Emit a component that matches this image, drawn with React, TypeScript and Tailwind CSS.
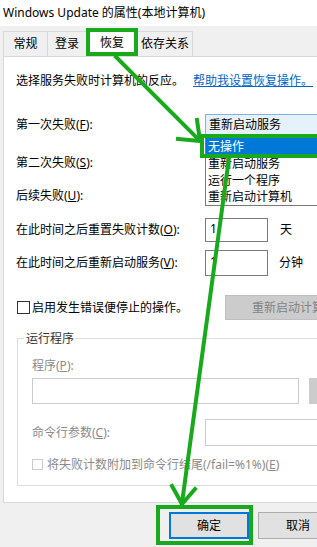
import React from 'react';

const font = { fontFamily: '"Noto Sans", "Noto Sans CJK SC", sans-serif' };

const Tab = ({ label, active }: { label: string; active?: boolean }) => (
  <div
    className={`flex items-center justify-center whitespace-nowrap border border-b-0 text-[12px] ${
      active
        ? 'h-[28px] bg-white border-[#d9d9d9] -mx-[1px] z-10 relative'
        : 'h-[25px] bg-[#f0f0f0] border-[#d9d9d9]'
    }`}
  >
    {label}
  </div>
);

export default function App() {
  return (
    <div className="relative w-[317px] h-[547px] overflow-hidden bg-[#f0f0f0] text-black" style={font}>
      {/* title bar */}
      <div className="h-[26px] bg-white flex items-center px-[3px] text-[12px] whitespace-nowrap">
        Windows Update 的属性(本地计算机)
      </div>

      {/* tabs */}
      <div className="flex items-end h-[30px] pl-[3px]">
        <div className="w-[45px] shrink-0"><Tab label="常规" /></div>
        <div className="w-[40px] shrink-0 -ml-[1px]"><Tab label="登录" /></div>
        <div className="w-[50px] shrink-0"><Tab label="恢复" active /></div>
        <div className="w-[56px] shrink-0"><Tab label="依存关系" /></div>
      </div>

      {/* tab panel */}
      <div className="ml-[3px] w-[330px] h-[447px] border border-[#d9d9d9] bg-white flex flex-col text-[12px] whitespace-nowrap">
        <div className="h-[15px]" />
        <div className="h-[18px] flex items-center pl-[12px]">
          选择服务失败时计算机的反应。
          <span className="ml-[9px] text-[#0066cc] underline">帮助我设置恢复操作。</span>
        </div>

        <div className="h-[24px]" />
        <div className="h-[21px] flex items-center pl-[12px] relative">
          <span className="w-[189px] shrink-0">第一次失败(<u>F</u>):</span>
          <div className="h-[21px] w-[125px] shrink-0 border border-[#7eb4ea] bg-[#e5f1fb] pl-[3px] leading-[19px]">重新启动服务</div>
          {/* open list */}
          <div className="absolute left-[201px] top-[21px] w-[125px] border border-[#7a7a7a] bg-white pt-[2px] z-10">
            <div className="h-[17px] bg-[#0078d7] text-white pl-[2px] leading-[17px]">无操作</div>
            <div className="h-[17px] pl-[2px] leading-[17px]">重新启动服务</div>
            <div className="h-[17px] pl-[2px] leading-[17px]">运行一个程序</div>
            <div className="h-[16px] pl-[2px] leading-[16px]">重新启动计算机</div>
          </div>
        </div>

        <div className="h-[18px]" />
        <div className="h-[20px] flex items-center pl-[12px]">第二次失败(<u>S</u>):</div>
        <div className="h-[13px]" />
        <div className="h-[20px] flex items-center pl-[12px]">后续失败(<u>U</u>):</div>

        <div className="h-[12px]" />
        <div className="h-[24px] flex items-center pl-[12px]">
          <span className="w-[189px] shrink-0">在此时间之后重置失败计数(<u>O</u>):</span>
          <div className="h-[24px] w-[63px] shrink-0 border border-[#7a7a7a] bg-white pl-[4px] leading-[20px]">1</div>
          <span className="ml-[12px]">天</span>
        </div>
        <div className="h-[8px]" />
        <div className="h-[26px] flex items-center pl-[12px]">
          <span className="w-[189px] shrink-0">在此时间之后重新启动服务(<u>V</u>):</span>
          <div className="h-[26px] w-[63px] shrink-0 border border-[#7a7a7a] bg-white pl-[4px] leading-[22px]">1</div>
          <span className="ml-[11px]">分钟</span>
        </div>

        <div className="h-[19px]" />
        <div className="h-[25px] flex items-center pl-[13px]">
          <div className="w-[13px] h-[13px] shrink-0 border border-[#333] bg-white" />
          <span className="ml-[2px] w-[193px] shrink-0">启用发生错误便停止的操作。</span>
          <div className="h-[25px] w-[150px] shrink-0 bg-[#cccccc] border border-[#bfbfbf] text-[#838383] pl-[26px] leading-[23px]">
            重新启动计算机选项(R)...
          </div>
        </div>

        {/* group box */}
        <div className="h-[18px]" />
        <div className="relative ml-[13px] h-[148px] border border-[#dcdcdc] flex flex-col">
          <span className="absolute left-[6px] -top-[9px] bg-white px-[2px] text-[#333]">运行程序</span>
          <div className="h-[18px]" />
          <div className="h-[18px] flex items-center pl-[14px] text-[#8a8a8a]">程序(<u>P</u>):</div>
          <div className="h-[3px]" />
          <div className="flex pl-[14px] gap-[10px]">
            <div className="h-[26px] w-[267px] shrink-0 border border-[#cccccc] bg-white" />
            <div className="h-[26px] w-[80px] shrink-0 border border-[#cccccc] bg-[#cccccc]" />
          </div>
          <div className="h-[15px]" />
          <div className="h-[27px] flex items-center pl-[14px] text-[#8a8a8a]">
            <span className="w-[173px] shrink-0">命令行参数(<u>C</u>):</span>
            <div className="h-[27px] w-[120px] shrink-0 border border-[#cccccc] bg-white" />
          </div>
          <div className="h-[12px]" />
          <div className="h-[13px] flex items-center pl-[14px] text-[#8a8a8a]">
            <div className="w-[11px] h-[11px] shrink-0 border border-[#cccccc] bg-white" />
            <span className="ml-[4px]">将失败计数附加到命令行结尾(/fail=%1%)(<u>E</u>)</span>
          </div>
        </div>
      </div>

      {/* dialog buttons */}
      <div className="flex gap-[9px] pl-[169px] pt-[9px] text-[12px]">
        <div className="h-[27px] w-[80px] shrink-0 border-2 border-[#0078d7] bg-[#e1e1e1] flex items-center justify-center">确定</div>
        <div className="h-[27px] w-[80px] shrink-0 border border-[#adadad] bg-[#e1e1e1] flex items-center justify-center">取消</div>
      </div>

      {/* green annotations */}
      <svg className="absolute inset-0 pointer-events-none z-20" width="317" height="547" viewBox="0 0 317 547">
        <g stroke="#19a91c" strokeWidth="4" fill="none" strokeLinecap="square">
          <rect x="88" y="30" width="48" height="24" />
          <line x1="116" y1="57" x2="199" y2="140" />
          <polyline points="178,139 200,141 197,120" />
          <rect x="202" y="136" width="120" height="20" />
          <line x1="229" y1="158" x2="182" y2="503" />
          <polyline points="172,486 182,504 195,489" />
          <rect x="158" y="507" width="93" height="36" />
        </g>
      </svg>
    </div>
  );
}
